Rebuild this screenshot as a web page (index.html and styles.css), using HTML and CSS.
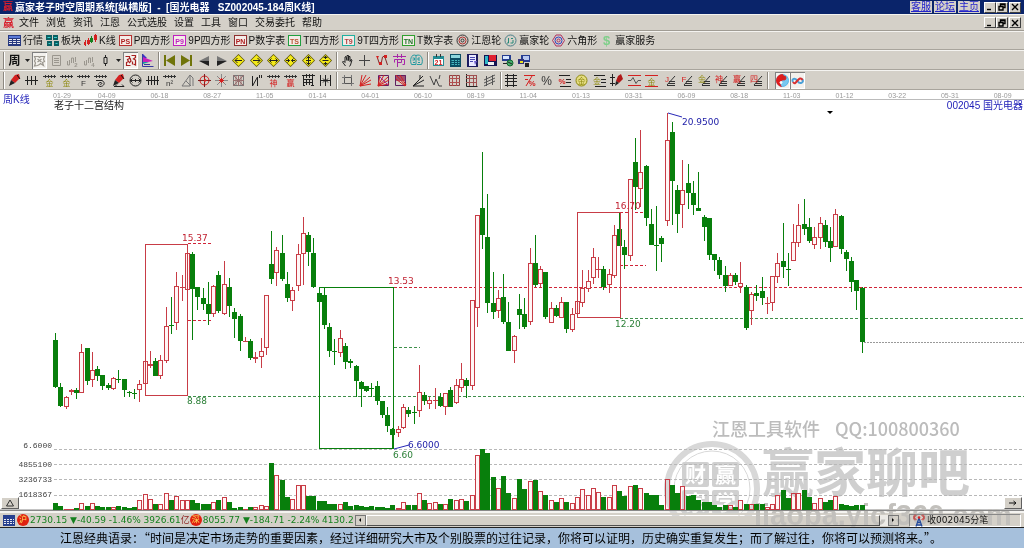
FILE: index.html
```html
<!DOCTYPE html>
<html lang="zh-CN">
<head>
<meta charset="utf-8">
<title>赢家老子时空周期系统</title>
<link rel="stylesheet" href="styles.css">
</head>
<body>
<header class="titlebar">
  <span class="logo">赢</span>
  <h1 class="title">赢家老子时空周期系统[纵横版] &nbsp;- &nbsp;[国光电器 &nbsp; SZ002045-184周K线]</h1>
  <nav class="title-links"><a href="#">客服</a><a href="#">论坛</a><a href="#">主页</a></nav>
  <div class="win-buttons">
    <button aria-label="最小化"><svg viewBox="0 0 8 8"><path d="M1 6.5h4" /></svg></button>
    <button aria-label="还原"><svg viewBox="0 0 8 8"><path d="M2.500 3V1h4.500v3.500h-2M1 3.500h4v3.500h-4zM3 1.500h4"/></svg></button>
    <button class="spaced" aria-label="关闭"><svg viewBox="0 0 8 8"><path d="M1 1l6 6M7 1l-6 6"/></svg></button>
  </div>
</header>
<div class="menubar">
  <span class="logo">赢</span>
  <nav class="menu">
    <a href="#">文件</a><a href="#">浏览</a><a href="#">资讯</a><a href="#">江恩</a><a href="#">公式选股</a><a href="#">设置</a><a href="#">工具</a><a href="#">窗口</a><a href="#">交易委托</a><a href="#">帮助</a>
  </nav>
  <div class="win-buttons">
    <button aria-label="最小化子窗口"><svg viewBox="0 0 8 8"><path d="M1 6.500h4"/></svg></button>
    <button aria-label="还原子窗口"><svg viewBox="0 0 8 8"><path d="M2.500 3V1h4.500v3.500h-2M1 3.500h4v3.500h-4zM3 1.500h4"/></svg></button>
    <button class="spaced" aria-label="关闭子窗口"><svg viewBox="0 0 8 8"><path d="M1 1l6 6M7 1l-6 6"/></svg></button>
  </div>
</div>
<div class="toolbar named" id="bar-views"></div>
<div class="toolbar" id="bar-main"></div>
<div class="toolbar" id="bar-draw"></div>
<main class="workspace">
  <div class="chart-wrap">
    <svg class="chart" id="chart" viewBox="0 90 1024 421" role="img" aria-label="国光电器周K线图"></svg>
    <button class="corner left" aria-label="展开"><svg viewBox="0 0 10 8"><path d="M5 1l3.500 6h-7z" fill="none" stroke="#333"/></svg></button>
    <button class="corner right" aria-label="向右"><svg viewBox="0 0 10 8"><path d="M1 4h7M5.500 2l2.500 2-2.500 2" fill="none" stroke="#111"/></svg></button>
  </div>
  <footer class="status">
    <button class="status-grid" aria-label="行情表"><svg viewBox="0 0 12 11"><rect width="12" height="11" fill="#27408f"/><path d="M1 4.500h10M1 6.500h10M1 8.500h10" stroke="#e8e8f0" stroke-dasharray="2 1"/></svg></button>
    <div class="quotes">
      <span class="badge">沪</span><span>2730.15 ▼-40.59 -1.46% 3926.61</span><span class="unit">亿</span>
      <span class="badge">深</span><span>8055.77 ▼-184.71 -2.24% 4130.2</span>
    </div>
    <div class="scroll">
      <button aria-label="向左滚动"><svg viewBox="0 0 8 8"><path d="M5 2v4l-2-2z"/></svg></button>
      <div class="track"><div class="thumb"></div></div>
      <button aria-label="向右滚动"><svg viewBox="0 0 8 8"><path d="M3 2v4l2-2z"/></svg></button>
    </div>
    <div class="receive">
      <svg viewBox="0 0 12 13"><path d="M6 4L3 12.500M6 4l3 8.500M4.500 8.500h3M3.500 11h5" fill="none" stroke="#234a9c" stroke-width="1.300"/><path d="M3.500 5.500a2 2 0 0 1 0-4M8.500 5.500a2 2 0 0 0 0-4M2 6.500a4 4 0 0 1 0-6M10 6.500a4 4 0 0 0 0-6" fill="none" stroke="#d33"/><circle cx="6" cy="3.500" r="1.300" fill="#d22"/></svg>
      <span>收002045分笔</span>
    </div>
  </footer>
  <svg class="watermark" viewBox="0 0 376 116" aria-hidden="true">
    <text class="wm-line" x="64" y="24">江恩工具软件</text>
    <text class="wm-line" x="187" y="24">QQ:100800360</text>
    <g class="wm-mark">
      <circle class="ring" cx="64" cy="77" r="45" stroke-width="6"/>
      <circle class="ring" cx="64" cy="77" r="38" stroke-width="1"/>
      <rect x="34" y="50" width="27" height="25" rx="2"/><rect x="64" y="50" width="27" height="25" rx="2"/>
      <rect x="34" y="78" width="27" height="24" rx="2"/><rect x="64" y="78" width="27" height="24" rx="2"/>
      <text class="wm-seal" x="37" y="70">财</text><text class="wm-seal" x="67" y="70">赢</text>
      <text class="wm-seal" x="37" y="98">家</text><text class="wm-seal" x="67" y="98">学</text>
    </g>
    <text class="wm-name" x="114" y="80">赢家聊吧</text>
    <text class="wm-site" x="106" y="113">liaoba.yicf360.com</text>
  </svg>
</main>
<div class="ticker">江恩经典语录：“时间是决定市场走势的重要因素，经过详细研究大市及个别股票的过往记录，你将可以证明，历史确实重复发生；而了解过往，你将可以预测将来。”。</div>
<script src="app.js"></script>
</body>
</html>
```
FILE: styles.css
```css
* { box-sizing: border-box; }
body {
  margin: 0;
  background: #d4d0c8;
  color: #111;
  font: 10px/12px "Liberation Sans", "Noto Sans CJK SC", sans-serif;
}
button { padding: 0; border: 0; background: none; font: inherit; color: inherit; }
a { color: inherit; text-decoration: none; }

.titlebar {
  display: flex;
  align-items: center;
  height: 14px;
  padding: 0 3px;
  background: #0a246a;
  color: #fff;
}
.logo { width: 12px; color: #d81e2c; font-weight: 700; }
.title { margin: 0; font-size: 10px; line-height: 13px; white-space: nowrap; }
.title-links { display: flex; gap: 2px; margin-left: auto; margin-right: 4px; }
.title-links a {
  padding: 0 1px;
  background: #d4d0c8;
  color: #2222cc;
  line-height: 12px;
  text-decoration: underline;
}
.win-buttons { display: flex; }
.win-buttons button {
  width: 12px;
  height: 11px;
  border: 1px solid;
  border-color: #fff #404040 #404040 #fff;
  background: #d4d0c8;
}
.win-buttons .spaced { margin-left: 1px; }
.win-buttons svg { display: block; width: 8px; height: 8px; margin: auto; fill: none; stroke: #000; stroke-width: 1.400; }

.menubar {
  display: flex;
  align-items: center;
  height: 17px;
  padding: 0 3px;
  border-top: 1px solid #f4f3f0;
  border-bottom: 1px solid #a09c94;
}
.menubar .logo { width: 16px; font-size: 11px; }
.menu { display: flex; gap: 7px; }
.menubar .win-buttons { margin-left: auto; }

.toolbar {
  display: flex;
  align-items: center;
  height: 20px;
  padding-left: 3px;
  border-top: 1px solid #f4f3f0;
  border-bottom: 1px solid #a8a49c;
}
.toolbar.named { height: 19px; gap: 3px; padding-left: 8px; }
.toolbar svg { display: block; width: 13px; height: 13px; overflow: visible; flex: none; }
.labelled { display: flex; align-items: center; gap: 2px; white-space: nowrap; }
.group { display: flex; justify-content: space-between; align-items: center; padding: 0 3px; }
.group { border-left: 1px solid #8c8880; box-shadow: inset 1px 0 #fff; }
.tool { display: grid; place-items: center; width: 15px; height: 17px; }
.tool.on { background: #f3f1ed; box-shadow: inset 1px 1px #808080, inset -1px -1px #fff; }
.tool.narrow { width: 7px; }
.w-main1 { width: 155px; }
.w-main2 { width: 178px; }
.w-main3 { width: 91px; }
.w-main4 { width: 108px; }
.w-draw1 { width: 333px; }
.w-draw2 { width: 164px; }
.w-draw3 { width: 267px; }
.w-draw4 { width: 41px; padding-left: 7px; }

.workspace { position: relative; }
.chart-wrap { position: relative; }
.chart { display: block; width: 100%; height: auto; background: #fff; }
.chart text { font: 9px "DejaVu Sans", "Noto Sans CJK SC", sans-serif; }
.chart .date { font: 7px "Liberation Sans", sans-serif; fill: #999; text-anchor: middle; }
.chart .scale { font: 8px "Liberation Mono", monospace; fill: #444; text-anchor: end; }
.chart .name { font: 10px "Liberation Sans", "Noto Sans CJK SC", sans-serif; }
.chart .code { text-anchor: end; }
.corner {
  position: absolute;
  bottom: 2px;
  display: grid;
  place-items: center;
  width: 18px;
  height: 12px;
  border: 1px solid;
  border-color: #fff #606060 #606060 #fff;
  background: #d4d0c8;
}
.corner svg { width: 10px; height: 8px; }
.corner.left { left: 1px; }
.corner.right { right: 2px; }

.status {
  display: flex;
  align-items: center;
  height: 17px;
  padding: 0 3px;
  border-top: 2px solid #f4f3f0;
  border-bottom: 1px solid #222;
}
.status-grid { width: 12px; height: 11px; }
.status-grid svg { display: block; width: 12px; }
.quotes {
  display: flex;
  flex: none;
  align-items: center;
  min-width: 340px;
  padding-left: 2px;
  white-space: nowrap;
  color: #16801f;
  font: 9px/13px "DejaVu Sans", "Noto Sans CJK SC", sans-serif;
}
.badge {
  flex: none;
  width: 12px;
  height: 12px;
  margin-right: 1px;
  border-radius: 50%;
  background: #e02010;
  color: #ffe45c;
  font-size: 8px;
  line-height: 12px;
  text-align: center;
}
.unit { color: #8c1f1f; }
.scroll { display: flex; flex: 1; align-items: center; }
.scroll button, .thumb {
  height: 11px;
  border: 1px solid;
  border-color: #fff #505050 #505050 #fff;
  background: #d4d0c8;
}
.scroll button { width: 11px; outline: 1px solid #777; outline-offset: -1px; }
.scroll button svg { display: block; width: 8px; height: 8px; }
.track { flex: 1; padding-right: 8px; background: #eceae6; }
.receive {
  display: flex;
  align-items: center;
  gap: 2px;
  width: 112px;
  height: 13px;
  margin-left: 10px;
  padding-left: 3px;
  border: 1px solid;
  border-color: #888 #fff #fff #888;
  font-family: "DejaVu Sans", "Noto Sans CJK SC", sans-serif;
  font-size: 9px;
}
.receive svg { width: 12px; height: 13px; }

.watermark { position: absolute; right: 0; bottom: 0; width: 376px; height: 116px; pointer-events: none; mix-blend-mode: darken; }
.watermark text { font-family: "Noto Sans CJK SC", sans-serif; font-weight: 700; fill: #cfcfcf; }
.watermark .wm-line { font-size: 18px; font-weight: 500; fill: #bcbcbc; }
.watermark .wm-name { font-size: 52px; }
.watermark .wm-site { font-family: "Liberation Sans", sans-serif; font-size: 29px; fill: #c2c0bc; }
.watermark .ring { fill: none; stroke: #d8d8d8; }
.watermark .wm-mark { fill: #d0d0d0; }
.watermark .wm-seal { font-size: 21px; fill: #fff; }

.ticker {
  height: 20px;
  padding-left: 60px;
  overflow: hidden;
  background: #a6c0dc;
  color: #000;
  font: 12px/19px "Noto Sans CJK SC", sans-serif;
  white-space: nowrap;
}
```
FILE: app.js
```javascript
// ---- drawing helpers ----
const L = (d, c = '#222', w = 1) => `<path d="${d}" fill="none" stroke="${c}" stroke-width="${w}"/>`;
const F = (d, c = '#222') => `<path d="${d}" fill="${c}"/>`;
const C = (x, y, r, c = '#222', f = 'none', w = 1) => `<circle cx="${x}" cy="${y}" r="${r}" fill="${f}" stroke="${c}" stroke-width="${w}"/>`;
const T = (s, x, y, size, c = '#222', w = 700) => `<text x="${x}" y="${y}" font-size="${size}" fill="${c}" text-anchor="middle" font-weight="${w}">${s}</text>`;
const icon = body => `<svg viewBox="0 0 13 13" aria-hidden="true">${body}</svg>`;
const RED = '#d42020', GREY = '#9a968e', GOLD = '#8f8a10';

// ---- view toolbar ----
const sheet = F('M0 1h13v11h-13z', '#283a80') + F('M1 2h11v2h-11z', '#5b7ad8') + L('M1 5.500h11M1 7.500h11M1 9.500h11', '#e8e8f0') + L('M4.500 4v7M8.500 4v7', '#283a80');
const boxed = (s, frame, ink) => `<rect x=".500" y="1.500" width="12" height="10" fill="#f4ece8" stroke="${frame}"/>` + T(s, 6.5, 9.5, 7, ink);
const ring = (a, b, c) => C(6.5, 6.5, 5.500, a) + C(6.5, 6.5, 3.500, b) + C(6.5, 6.5, 1.500, c);
const views = [
  ['行情', sheet],
  ['板块', F('M0 1h6v5h-6zM7 1h5v5h-5zM1 7h5v5h-5zM8 7h5v5h-5z', '#0a5f62') + L('M1.500 3.500h3M8 3.500h3M2.500 9.500h2M9.500 9.500h2', '#39d0d0')],
  ['K线', L('M1.500 6v6M4.500 4v7', RED) + F('M0 8h2v3h-2zM3 6h3v4h-3z', RED) + L('M7.500 2v7', '#16801f') + F('M6 4h3v4h-3z', '#16801f') + L('M11.500 0v8', RED) + F('M10 1h3v5h-3z', RED)],
  ['P四方形', boxed('PS', '#b83030', '#b02020')],
  ['9P四方形', boxed('P9', '#c020c0', '#c020c0')],
  ['P数字表', boxed('PN', '#903030', '#b02020')],
  ['T四方形', boxed('TS', '#20a040', '#b85030')],
  ['9T四方形', boxed('T9', '#20b0a0', '#b04040')],
  ['T数字表', boxed('TN', '#30a030', '#20702a')],
  ['江恩轮', ring('#333', '#b03030', '#333')],
  ['赢家轮', C(6.5, 6.5, 5.500, '#4a7f88') + L('M4.500 4v5h-1.500M7 4.500h2M6.500 9h2.500v-3', '#258a78')],
  ['六角形', L('M4 1h5l3.500 5.500-3.500 5.500h-5L.500 6.500z', '#b03060') + C(6.5, 6.5, 3.500, '#3040c0') + C(6.5, 6.5, 1.500, '#b03060')],
  ['赢家服务', T('$', 6.5, 11, 13, '#7fcf8a')]
];
document.getElementById('bar-views').innerHTML = views.map(([t, i]) => `<button class="labelled">${icon(i)}<span>${t}</span></button>`).join('');

// ---- main toolbar ----
const diamond = mark => F('M6.500 0l6.500 6.500-6.500 6.500L0 6.500z', '#5c5400') + F('M6.500 1l5.500 5.500-5.500 5.500L1 6.500z', '#f4ea18') + mark;
const bars = n => L('M1.500 7v4h2v-5M5.500 9v-5h2v5M9.500 3v5', GREY) + T(n, 10, 13, 6, GREY);
const drop = F('M0 5h5l-2.500 3z');
const mainGroups = [
  ['w-main1', [
    ['周', T('周', 6.5, 11, 12, '#111')], ['周期', drop, 'narrow'],
    ['缩放', L('M1.500 2.500h4l1 1 1-1h4l-1 3 1 2-2 1 1 3-3-2-1 1-2 1-3 .500 1-3-1-2 1-2zM4.500 5l4 3M8.500 5l-4 3', GREY, 1.2), 'on'],
    ['列表', L('M2.500 1.500h8v10h-8zM4 4.500h5M4 6.500h5M4 8.500h5', GREY)],
    ['二周', bars('2')], ['四周', bars('4')],
    ['K线样式', L('M6.500 1v2M6.500 10v2') + L('M5 3.500h3v6h-3z'), ], ['样式', drop, 'narrow'],
    ['指标', L('M1.500 2.500h4v2l-2 1 1 2-2 1v3h4M7.500 1.500h4v2l-2 1.500 2 1v5l-2-1M6 4l1 3-2 2M8.500 7.500v3', '#a82020', 1.2), 'on'],
    ['旗帜', F('M2 0l4 4-4 1z', '#3a36c8') + F('M2 3l10 4-10 2z', '#c820b8') + F('M2 8h6l-6 2z', '#14a0a0') + L('M1.500 0v12.500h11M3 10.500h6', '#3838a0')]
  ]],
  ['w-main2', [
    ['最前', F('M1 1h2v11h-2zM12 1v11L3 6.500z', '#70740a')],
    ['最后', F('M10 1h2v11h-2zM1 1v11l9-5.500z', '#70740a')],
    ['向前', F('M11 2v5h-10z', '#777') + F('M1 7h10v5z')],
    ['向后', F('M2 2v5h10z', '#777') + F('M2 7h10l-10 5z')],
    ['左移', diamond(L('M3 6.500h7M5.500 4l-2.500 2.500L5.500 9'))],
    ['右移', diamond(L('M3 6.500h7M7.500 4l2.500 2.500L7.500 9'))],
    ['扩展', diamond(L('M2.500 6.500h8M4.500 4.500l-2 2 2 2M8.500 4.500l2 2-2 2'))],
    ['压缩', diamond(L('M2 6.500h3.500M7.500 6.500H11M3.500 4.500l2 2-2 2M9.500 4.500l-2 2 2 2'))],
    ['拉高', diamond(L('M6.500 2v9M4.500 4.500l2-2 2 2M4.500 8.500l2 2 2-2M4 6.500h5'))],
    ['压低', diamond(L('M6.500 2v3M6.500 8v3M3.500 6.500h6') + F('M4 4l2.500-2L9 4zM4 9l2.500 2L9 9z'))]
  ]],
  ['w-main3', [
    ['拖动', L('M4.500 12l-3-4 1-1 1.500 1.500V3l1-.500 1 4V1.500h1.500v5l.500-4h1v5l1-2 1 .500-1.500 5-1 1.500')],
    ['十字光标', L('M6.500 1v11M1 6.500h11', '#444')],
    ['波段', L('M1.500 4l2 6 2-2 1-5 2-1 1 3 2 6', '#802828') + F('M0 2h3l-1.500 3zM3 8h3v3h-3zM8 1h3v3h-3z', RED)],
    ['节气', L('M0 2.500h13M4.500 0v4M8.500 0v4M1.500 5.500h10v5h-2M1.500 5.500v3M4.500 6v7M4.500 8.500h4v-3', '#a825a8')],
    ['头脑', L('M6 1.500C1-1-.500 7 1.500 10.500h4.500V1.500C12-1 13.500 7 11.500 10.500h-4.500M2.500 4h2v2h-2M10 4h-2v2h2M3 8.500h2M8 8.500h2', '#259aa0')]
  ]],
  ['w-main4', [
    ['日历', F('M1 2h11v10h-11z', '#238c94') + F('M2 5h9v6h-9z', '#fff') + L('M4.500 0v3M8.500 0v3', '#333') + T('21', 6.5, 11, 7, RED)],
    ['计算器', F('M1 0h11v13h-11z', '#0c4e64') + F('M2 1h9v3h-9z', '#8ed6dc') + L('M2.500 6.500h8M2.500 8.500h8M2.500 10.500h8', '#49b8c0', 1) + L('M5.500 5v7M8.500 5v7', '#0c4e64')],
    ['笔记', F('M1 0h11v13h-11z', '#1b1b60') + F('M3 1h7v11h-7z', '#e8e8ff') + L('M4 3.500h5M4 5.500h5M4 7.500h3', '#4848b0') + F('M8 7h3l-2 4z', '#7060d0')],
    ['保存', F('M0 1h13v11h-13z', '#151552') + F('M1 2h3v8h-3z', '#30b8c8') + F('M5 1h7v6h-7z', '#e02030') + F('M4 8h6v3h-6z', '#f2f2f2')],
    ['网络', F('M1 1h9v6h-9z', '#263c90') + F('M2 2h6v3h-6z', '#d8e8ff') + C(9, 9, 3, '#106830', '#48b070') + L('M2 9.500h4M7 8l4 2')],
    ['打印', F('M3 1h9v7h-9z', '#263c90') + F('M5 2h6v4h-6z', '#b8c8f0') + F('M0 5h6v5h-6z', '#30307a') + F('M7 9h4v4h-4z', '#222') + F('M2 7h3v2h-3z', '#e8e020')]
  ]]
];

// ---- drawing toolbar ----
const comb = L('M0 2.500h13M2.500 1v3M5.500 1v3M8.500 1v3M11.500 1v3', '#333');
const under = (s, c) => comb + T(s, 6.5, 12, 8, c, 400);
const pen = F('M7 1l4-1 1 4-5 5-4-3z', RED) + F('M3 6l4 3-6 3z') + L('M9 1l3 4', '#111');
const fan = L('M4 11.500h8M5 9.500h7M6 7.500h6M4 11l8-9', '#333');
const fanText = (s, c) => fan + T(s, 4, 8, 8, c, 400);
const rays = c => L('M1 12L3 1M1 12L7 1M1 12l10-9M1 12l11-6M1 12l11-2', c);
const frame = c => L('M1.500 1.500h10v10h-10z', c);
const drawGroups = [
  ['w-draw1', [
    ['画笔', pen],
    ['周期线', L('M0 6.500h13M2.500 2v9M6.500 2v9M10.500 2v9')],
    ['金分割', under('金', GOLD)], ['金周期', under('金', GOLD)], ['斐波那契', under('F', '#333')],
    ['螺旋', comb + L('M2 6.500h6c4 2 2 6-2 6-3-1-2-4 1-4 2 1 0 2-1 2')],
    ['标注', pen + L('M2 12.500h10M10 10.500l2 2M5 10.500l-2 2')],
    ['圆周', C(6.5, 6.5, 5.500) + L('M1 6.500h11M3.500 4.500l-2 2 2 2M9.500 4.500l2 2-2 2M6.500 5v3')],
    ['等分', L('M0 6.500h13M2.500 2v9M5.500 2v9M8.500 2v9M11.500 2v9')],
    ['平方', under('n²', '#333')],
    ['角度', L('M1 12L9 1v11zM9 1l3 3v8M5 7l5 5', '#777')],
    ['江恩圆', C(6.5, 6.5, 4.500, RED) + L('M6.500 0v13M0 6.500h13', '#802020') + F('M6 4l3 2.500-3 2z', RED)],
    ['星线', L('M6.500 0v13M0 6.500h13M2 2l9 9M11 2l-9 9', '#888') + L('M4 6.500h5M6.500 4v5M4.500 4.500l4 4M8.500 4.500l-4 4', RED)],
    ['方星', frame('#777') + L('M6.500 1v11M1 6.500h11M1 1l11 11M12 1L1 12M4 2v9M9 2v9', '#987070')],
    ['折线', L('M2.500 2v10l5-9v9') + L('M9.500 1v3M11.500 1v3')],
    ['神奇', under('神', RED)], ['赢家', under('赢', RED)],
    ['栅格', L('M0 1.500h13M1.500 1v11M4.500 0v4M7.500 0v4M10.500 0v12M1 5.500h10M2 8.500h9M4.500 6v5M7.500 6v5M1 11.500h2M9 11.500h3')],
    ['间距', L('M1.500 1v11M11.500 1v11M6.500 1v11M1 6.500h11M4 4.500l2 2-2 2M9 4.500l-2 2 2 2')]
  ]],
  ['w-draw2', [
    ['矩形', L('M3.500 3.500h7v6h-7z', '#555') + L('M1 3.500h2M3.500 1v2M10.500 10v2M11 9.500h2M10.500 1v2M1 9.500h2', '#777')],
    ['射线', rays(RED)], ['方射线', frame('#602060') + rays(RED) + L('M2 2l9 9', '#a030a0')],
    ['填充射线', F('M1 1h11v6h-11z', '#a05070') + frame('#602060') + L('M2 1l10 11M2 5l9 7M6 1l6 10', RED)],
    ['扇形', L('M1 12l10-10M1 12l11-6M1 12h11M8 1v4')],
    ['波浪', L('M0 2l4 9 2-6 3 7 3 0M10 1l-1 4', '#444')],
    ['方格', frame('#904040') + L('M4.500 1v11M8.500 1v11M1 4.500h11M1 8.500h11', '#b05050')],
    ['网格', L('M1.500 0v12.500h11', '#222') + L('M4.500 1v11M8.500 1v11M11.500 1v11M1 1.500h11M1 4.500h11M1 8.500h11', '#a05050')],
    ['平行线', L('M1 6l11-5M1 9l11-5M1 12l11-5M3.500 2v10M9.500 1v10', '#555')]
  ]],
  ['w-draw3', [
    ['刻度', L('M2.500 0v13M8.500 0v13M0 1.500h12M0 4.500h12M0 7.500h12M0 11.500h12')],
    ['七分', L('M1 1.500h11M9 2L3 12M2 5.500h3', RED) + T('%', 9, 12, 8, RED)],
    ['百分比', T('%', 6.5, 11, 12, '#333', 400)],
    ['百分线', L('M1 1.500h11M8 5.500h5M8 8.500h5M2 12.500h11') + T('%', 4, 10, 8, RED)],
    ['金圆', C(6.5, 6.5, 5.500, GOLD, '#e4dc80') + T('金', 6.5, 10, 8, GOLD, 400)],
    ['金线', L('M1 1.500h11M8 5.500h5M8 8.500h5M2 12.500h11') + T('金', 4, 10, 8, GOLD, 400)],
    ['画线笔', L('M2.500 0v12M0 3.500h5M0 9.500h5') + F('M8 2l3-2 2 5-4 4-3-2z', '#b01818') + F('M6 7l3 2-4 3z')],
    ['波形线', L('M0 1.500h13M0 11.500h13', RED) + L('M0 6.500h3l2-3 3 6 2-3h3', '#555')],
    ['金红线', L('M0 1.500h13M0 12.500h13', RED) + T('金', 6.5, 10.5, 8, GOLD, 400)],
    ['J线', fanText('J', RED)], ['F线', fanText('F', RED)], ['金扇', fanText('金', GOLD)],
    ['神扇', fanText('神', RED)], ['赢扇', fanText('赢', RED)], ['四扇', fanText('四', RED)]
  ]],
  ['w-draw4', [
    ['太极', C(6.5, 6.5, 6, '#58b8e8', '#78c8f0') + F('M6.500 0a6.500 6.500 0 0 0 0 13c-3-2-2-6 0-6.500s3-4 0-6.500z', '#e01c1c') + C(8, 4, 2, RED, RED) + C(5, 8.5, 1, '#fff', '#fff'), 'on'],
    ['无限', L('M11 5C14 8 9 11 6.500 7', '#4aa0d8', 2) + L('M6.500 7C4 3 0 5 2 8', '#4aa0d8', 2) + L('M2 8c2 3 3 0 4.500-1.500S10 3 11.500 6', '#d83030', 2), 'on']
  ]]
];
const renderGroups = (id, groups) => {
  document.getElementById(id).innerHTML = groups.map(([width, tools]) =>
    `<div class="group ${width}">` + tools.map(([name, body, mod = '']) =>
      `<button class="tool ${mod}" aria-label="${name}">${mod === 'narrow' ? `<svg viewBox="0 0 5 13" style="width:5px" aria-hidden="true">${body}</svg>` : icon(body)}</button>`).join('') + '</div>').join('');
};
renderGroups('bar-main', mainGroups);
renderGroups('bar-draw', drawGroups);

// ---- price chart: colour, high, body top, body bottom, low, volume height ----
const candles = `G333,340,387,388,7 G383,387,406,407,4 R396,397,407,409,1 R389,390,392,395,1 G388,390,393,399,2 R344,352,393,393,7 G348,348,381,385,4 R352,370,380,387,7 G366,369,376,381,4 G375,375,386,390,3
G383,385,388,390,3 R377,378,389,390,3 G370,379,380,383,4 G379,379,390,397,3 G391,392,393,397,2 G389,393,394,399,3 R380,384,390,402,10 R361,361,384,384,16 R351,364,366,368,11 G358,361,376,376,6
R355,360,376,379,6 R307,326,361,363,17 G297,325,326,334,10 R272,286,323,330,14 R275,287,288,301,10 R244,253,290,290,10 G252,254,289,340,10 G287,287,297,310,7 G288,298,304,310,6 G282,304,314,325,6
R285,286,314,317,8 G271,275,311,313,10 R261,284,314,315,13 G278,287,306,317,8 G308,312,319,338,2 G314,316,341,351,3 R337,341,342,342,1 G339,341,358,360,3 R352,357,359,363,3 R338,351,357,368,5
R295,295,348,355,4 G231,264,279,284,47 R247,250,273,286,35 G235,253,279,281,30 G272,284,298,302,13 R287,290,301,311,11 R244,254,286,291,25 R217,233,254,285,25 G232,235,252,266,14 G238,253,287,288,14
G288,293,302,302,9 G287,295,325,329,9 G323,327,351,357,6 G339,351,352,365,6 R330,338,353,357,6 G343,346,362,369,8 G359,361,363,368,4 G365,366,381,397,5 G381,382,389,407,4 G386,386,391,392,3
G383,388,389,397,4 G381,386,401,405,3 G401,401,415,418,3 G407,415,426,432,2 G428,429,435,449,5 R426,429,433,437,2 R404,407,428,429,8 G407,410,414,417,5 G406,412,413,424,5 R365,392,411,417,17
G392,395,401,405,10 R397,400,404,409,7 R388,400,401,409,8 G393,397,406,407,6 R393,393,407,415,6 G387,390,407,407,11 R379,385,403,404,10 R363,379,388,392,11 G378,380,386,398,9 R300,300,386,390,15
R215,215,308,327,55 G152,208,235,249,61 G194,237,303,313,57 G272,303,312,319,33 R290,298,311,318,22 G274,297,322,324,34 G302,322,351,351,17 R335,336,351,363,12 G294,309,315,329,31 G298,314,327,329,21
R248,263,322,325,29 G235,263,285,287,30 R266,269,284,287,19 G272,272,317,319,15 R302,308,323,323,10 G305,308,316,317,8 R297,302,318,318,12 G302,302,329,333,8 R308,314,330,332,7 R301,301,314,318,13
R270,288,303,307,21 R270,281,289,292,15 R248,257,278,284,22 R257,269,270,278,18 G266,269,287,290,13 R269,274,285,293,13 R225,235,276,278,25 G213,229,246,246,19 G240,247,255,269,14 R179,179,256,261,24
G138,162,187,210,25 R130,172,189,207,22 G165,166,218,226,17 G209,224,245,245,15 G206,245,246,271,15 G236,238,244,262,5 R113,140,221,226,31 G122,132,181,225,25 G185,190,214,233,17 R160,190,205,228,24
G164,183,193,209,14 G181,193,205,215,15 G172,208,211,211,10 G215,217,227,241,8 G218,218,255,260,8 G254,254,260,271,5 G257,260,275,279,3 G266,275,286,292,5 R273,275,286,286,5 G273,275,282,285,3
R262,283,287,293,10 G285,287,328,330,6 R292,294,311,325,6 G285,293,296,301,6 G277,291,298,305,6 R297,303,304,314,3 R276,276,303,311,6 R253,263,277,283,15 G223,261,267,278,20 G253,269,270,286,12
R224,242,261,261,17 R204,225,243,247,17 G199,224,229,235,20 G218,227,241,243,13 R227,237,245,249,7 R217,223,238,249,12 G220,225,242,247,8 G227,241,248,262,10 R209,214,247,247,14 G215,216,249,254,6
G250,252,259,271,5 G257,261,282,292,4 G280,280,291,310,5 G287,288,342,353,5`.split(/\s+/);
const GREEN = '#087f0c', CRIMSON = '#c83c46';
const STEP = 5.273, FIRST = 55.5, BASE = 510;
const dash = (y, x1, x2, c, pattern = '3 2') => `<path d="M${x1} ${y + 0.5}H${x2}" stroke="${c}" stroke-dasharray="${pattern}"/>`;
let out = '<path d="M54 99.500H1024" stroke="#bbb"/><path d="M0 510.500H1024" stroke="#888" stroke-width="2"/>';
[449, 464, 479, 495].forEach(y => { out += dash(y, 54, 1024, '#b8b8b8'); });
out += dash(396, 188, 1024, '#3f8f4b') + dash(287, 394, 1024, '#d02438') + dash(318, 620, 1024, '#3f8f4b') + dash(342, 864, 1024, '#999', '2 1');
out += dash(243, 188, 213, '#d02438') + dash(320, 188, 213, '#d02438') + dash(347, 394, 420, '#3f8f4b') + dash(212, 620, 646, '#d02438') + dash(265, 620, 646, '#d02438');
candles.forEach((row, i) => {
  const up = row[0] === 'R';
  const [high, top, bottom, low, vol] = row.slice(1).split(',').map(Number);
  const x = Math.round(FIRST + STEP * i - 0.5) + 0.5;
  const c = up ? CRIMSON : GREEN;
  if (up && bottom - top > 2) {
    out += `<path d="M${x} ${high}V${top}M${x} ${bottom}V${low}" stroke="${c}"/><rect x="${x - 2}" y="${top + 0.5}" width="4" height="${bottom - top - 1}" fill="#fff6f6" stroke="${c}"/>`;
  } else {
    out += `<path d="M${x} ${high}V${low}" stroke="${c}"/><rect x="${x - 2.5}" y="${top}" width="5" height="${Math.max(1, bottom - top)}" fill="${c}"/>`;
  }
  out += up && vol > 2
    ? `<rect x="${x - 2}" y="${BASE - vol + 0.5}" width="4" height="${vol - 1}" fill="#fff6f6" stroke="${c}"/>`
    : `<rect x="${x - 2.5}" y="${BASE - vol}" width="5" height="${vol}" fill="${c}"/>`;
});
out += `<g fill="none"><rect x="145.500" y="244.500" width="42" height="151" stroke="${CRIMSON}"/><rect x="319.500" y="287.500" width="74" height="161" stroke="${GREEN}"/><rect x="577.500" y="212.500" width="43" height="105" stroke="${CRIMSON}"/><path d="M668 113l14 4M394 449l15-4" stroke="#2828b8"/></g>`;
const label = (x, y, s, c, cls = '') => `<text x="${x}" y="${y}" fill="${c}" class="${cls}">${s}</text>`;
out += label(182, 241, '15.37', '#c02030') + label(187, 404, '8.88', '#2c8038') + label(388, 284, '13.53', '#c02030') + label(393, 458, '6.60', '#2c8038')
  + label(408, 448, '6.6000', '#2020a8') + label(615, 209, '16.70', '#c02030') + label(615, 327, '12.20', '#2c8038') + label(682, 125, '20.9500', '#2020a8')
  + label(3, 103, '周K线', '#2020b8', 'name') + label(54, 109, '老子十二宫结构', '#222', 'name') + label(1023, 109, '002045 国光电器', '#2020b8', 'name code');
[['6.6000', 448], ['4855100', 467], ['3236733', 482], ['1618367', 497]].forEach(([s, y]) => { out += label(52, y, s, '#444', 'scale'); });
['01-29', '04-09', '06-18', '08-27', '11-05', '01-14', '04-01', '06-10', '08-19', '11-04', '01-13', '03-31', '06-09', '08-18', '11-03', '01-12', '03-22', '05-31', '08-09']
  .forEach((s, i) => { out += label(i ? 54 + 52.7 * i : 62, 98, s, '#999', 'date'); });
out += '<path d="M827 111h6l-3 3z"/>';
document.getElementById('chart').innerHTML = out;
```
